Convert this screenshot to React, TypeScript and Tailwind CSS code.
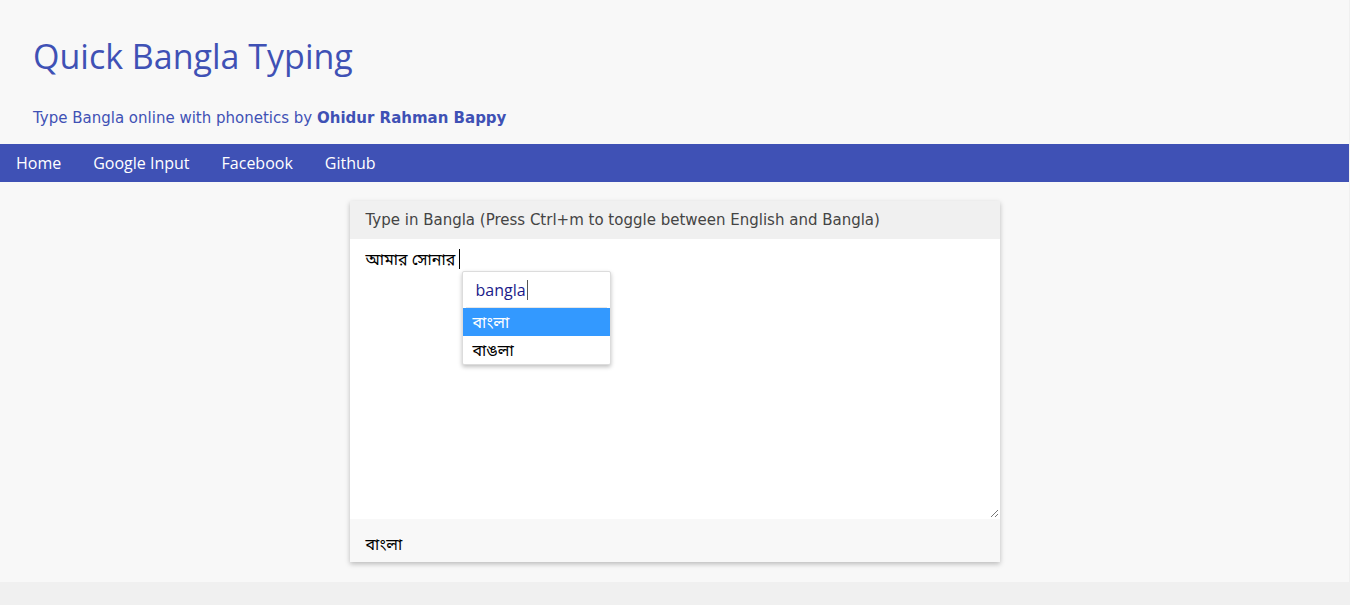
import React from 'react';

const font = { fontFamily: '"Open Sans", "Noto Sans", "Noto Sans Bengali", sans-serif' };
const wide = { fontFamily: '"DejaVu Sans", "Noto Sans Bengali", sans-serif' };

function NavBar() {
  const links = ['Home', 'Google Input', 'Facebook', 'Github'];
  return (
    <nav className="flex h-[38px] items-center bg-[#3f51b5] px-4 gap-8">
      {links.map((l) => (
        <a key={l} className="text-[16px] text-white">
          {l}
        </a>
      ))}
    </nav>
  );
}

function Suggestions() {
  return (
    <div className="absolute left-[112px] top-[32px] w-[149px] rounded-[2px] border border-[#dcdcdc] bg-white shadow-[0_2px_4px_rgba(0,0,0,0.25)]">
      <div className="mx-[3px] flex h-[36px] items-center border-b border-[#e6e6e6] px-[10px]">
        <span className="text-[16px] text-[#1a1a8a]">bangla</span>
        <span className="ml-[1px] h-[20px] w-[1px] bg-[#555]" />
      </div>
      <div className="flex h-[28px] items-center bg-[#3399ff] px-[10px] text-[16px] text-white">বাংলা</div>
      <div className="flex h-[28px] items-center px-[10px] text-[16px] text-black">বাঙলা</div>
    </div>
  );
}

export default function App() {
  return (
    <div className="min-h-[605px] bg-[#f0f0f0]" style={font}>
      <div className="w-[1349px] bg-[#f8f8f8] pb-[20px]">
        <header className="px-[33px] pt-[32px] pb-[14px]">
          <h1 className="text-[34px] leading-[48px] text-[#3f51b5]">Quick Bangla Typing</h1>
          <p className="mt-[26px] text-[15px] leading-[24px] text-[#3f51b5]" style={wide}>
            Type Bangla online with phonetics by <b>Ohidur Rahman Bappy</b>
          </p>
        </header>
        <NavBar />
        <div className="flex justify-center pt-[19px]">
          <div className="w-[650px] bg-white shadow-[0_2px_5px_rgba(0,0,0,0.25)]">
            <div className="flex h-[38px] items-center bg-[#f0f0f0] px-4 text-[15px] text-[#444]" style={wide}>
              Type in Bangla (Press Ctrl+m to toggle between English and Bangla)
            </div>
            <div className="relative h-[280px] px-4 pt-[8px]">
              <div className="flex items-center text-[16px] text-black">
                <span>আমার সোনার </span>
                <span className="ml-[4px] h-[20px] w-[1px] bg-black" />
              </div>
              <Suggestions />
              <svg className="absolute bottom-[1px] right-[1px]" width="9" height="9" viewBox="0 0 9 9">
                <path d="M8 1 L1 8 M8 5 L5 8" stroke="#777" strokeWidth="1" />
              </svg>
            </div>
            <div className="flex h-[43px] items-center bg-[#f8f8f8] px-4 pt-[6px] text-[16px] text-black">বাংলা</div>
          </div>
        </div>
      </div>
    </div>
  );
}
